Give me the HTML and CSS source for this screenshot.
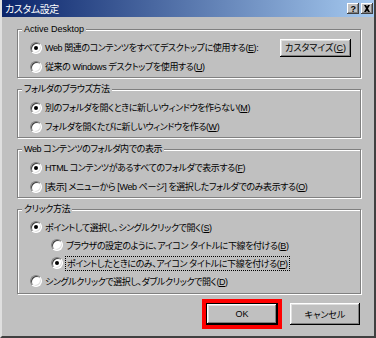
FILE: index.html
```html
<!DOCTYPE html>
<html lang="ja">
<head>
  <meta charset="UTF-8" />
  <title>カスタム設定</title>
  <link rel="stylesheet" href="styles.css">
</head>
<body>
  <div class="dialog">
    <div class="titlebar">
      <span class="title">カスタム設定</span>
      <div class="caption-btns">
        <span class="cbtn">?</span>
        <span class="cbtn">
          <svg width="8" height="7" viewBox="0 0 8 7"><path d="M1 0h2l1 1.5L5 0h2L5 3.5 7 7H5L4 5.5 3 7H1l2-3.5z" fill="#000"/></svg>
        </span>
      </div>
    </div>

    <div class="content">
      <fieldset class="group">
        <legend class="latin">Active Desktop</legend>
        <div class="row">
          <span class="radio on"></span>
          <span>Web 関連のコンテンツをすべてデスクトップに使用する(<u>E</u>):</span>
          <button class="btn customize">カスタマイズ(<u>C</u>)</button>
        </div>
        <div class="row">
          <span class="radio"></span>
          <span>従来の Windows デスクトップを使用する(<u>U</u>)</span>
        </div>
      </fieldset>

      <fieldset class="group">
        <legend>フォルダのブラウズ方法</legend>
        <div class="row">
          <span class="radio on"></span>
          <span>別のフォルダを開くときに新しいウィンドウを作らない(<u>M</u>)</span>
        </div>
        <div class="row">
          <span class="radio"></span>
          <span>フォルダを開くたびに新しいウィンドウを作る(<u>W</u>)</span>
        </div>
      </fieldset>

      <fieldset class="group">
        <legend>Web コンテンツのフォルダ内での表示</legend>
        <div class="row">
          <span class="radio on"></span>
          <span>HTML コンテンツがあるすべてのフォルダで表示する(<u>F</u>)</span>
        </div>
        <div class="row">
          <span class="radio"></span>
          <span>[表示] メニューから [Web ページ] を選択したフォルダでのみ表示する(<u>O</u>)</span>
        </div>
      </fieldset>

      <fieldset class="group click">
        <legend>クリック方法</legend>
        <div class="row">
          <span class="radio on"></span>
          <span>ポイントして選択し、シングルクリックで開く(<u>S</u>)</span>
        </div>
        <div class="row sub">
          <span class="radio"></span>
          <span>ブラウザの設定のように、アイコン タイトルに下線を付ける(<u>B</u>)</span>
        </div>
        <div class="row sub">
          <span class="radio on"></span>
          <span class="focus">ポイントしたときにのみ、アイコン タイトルに下線を付ける(<u>P</u>)</span>
        </div>
        <div class="row last">
          <span class="radio"></span>
          <span>シングルクリックで選択し、ダブルクリックで開く(<u>D</u>)</span>
        </div>
      </fieldset>

      <div class="actions">
        <button class="btn default latin">OK</button>
        <button class="btn cancel">キャンセル</button>
      </div>
    </div>
  </div>
</body>
</html>
```

FILE: styles.css
```css
body {
  margin: 0;
  background: #c0c0c0;
  font-family: "Liberation Sans", "Noto Sans CJK JP", sans-serif;
  font-size: 9px;
  letter-spacing: -0.4px;
  font-feature-settings: "palt";
  color: #000;
}
.latin {
  letter-spacing: 0;
}
.dialog {
  width: 376px;
  height: 338px;
  box-sizing: border-box;
  border: 2px solid;
  border-top: 0;
  border-color: #fff #404040 #404040 #dfdfdf;
}
.titlebar {
  height: 17px;
  display: flex;
  align-items: center;
  padding: 0 1px 0 3px;
  background: linear-gradient(to right, #0a246a, #a6caf0);
}
.title {
  flex: 1;
  color: #fff;
  font-size: 10px;
}
.caption-btns {
  display: flex;
  gap: 2px;
}
.cbtn {
  width: 12px;
  height: 11px;
  display: flex;
  align-items: center;
  justify-content: center;
  background: #c0c0c0;
  font: bold 9px "Liberation Sans", sans-serif;
  box-shadow: inset -1px -1px #404040, inset 1px 1px #fff, inset -2px -2px #808080;
}
.content {
  padding: 6px 13px 0 15px;
}
.group {
  margin: 5px 0 0;
  padding: 3px 0 1px 4px;
  border: 1px solid #808080;
  box-shadow: 1px 1px 0 #fff, inset 1px 1px 0 #fff;
}
.group:first-child {
  margin-top: 0;
}
.group legend {
  padding: 0 2px;
  line-height: 12px;
  background: #c0c0c0;
}
.row {
  display: flex;
  align-items: center;
  height: 19px;
  padding-left: 8px;
  white-space: nowrap;
}
.click .row {
  height: 18px;
}
.click {
  padding-bottom: 3px;
}
.row.sub {
  padding-left: 29px;
}
.radio {
  position: relative;
  flex: none;
  box-sizing: border-box;
  width: 12px;
  height: 12px;
  margin-right: 3px;
  border-radius: 50%;
  background: #fff;
  border: 1px solid;
  border-color: #808080 #fff #fff #808080;
  box-shadow: inset 1px 1px 0 #404040, inset -1px -1px 0 #dfdfdf;
}
.radio.on::after {
  content: "";
  position: absolute;
  left: 3px;
  top: 3px;
  width: 4px;
  height: 4px;
  border-radius: 50%;
  background: #000;
}
.focus {
  outline: 1px dotted #000;
  padding: 0 1px;
}
.btn {
  font: inherit;
  color: #000;
  background: #c0c0c0;
  border: 0;
  padding: 0;
  box-shadow: inset -1px -1px #000, inset 1px 1px #fff, inset -2px -2px #808080, inset 2px 2px #dfdfdf;
}
.customize {
  width: 71px;
  height: 18px;
  margin-left: auto;
  margin-right: 9px;
}
.actions {
  display: flex;
  justify-content: flex-end;
  gap: 12px;
  margin-top: 9px;
  padding-right: 1px;
}
.actions .btn {
  width: 72px;
  height: 22px;
}
.actions .cancel {
  width: 70px;
}
.btn.default {
  border: 1px solid #000;
  outline: 4px solid #f00;
}
```
